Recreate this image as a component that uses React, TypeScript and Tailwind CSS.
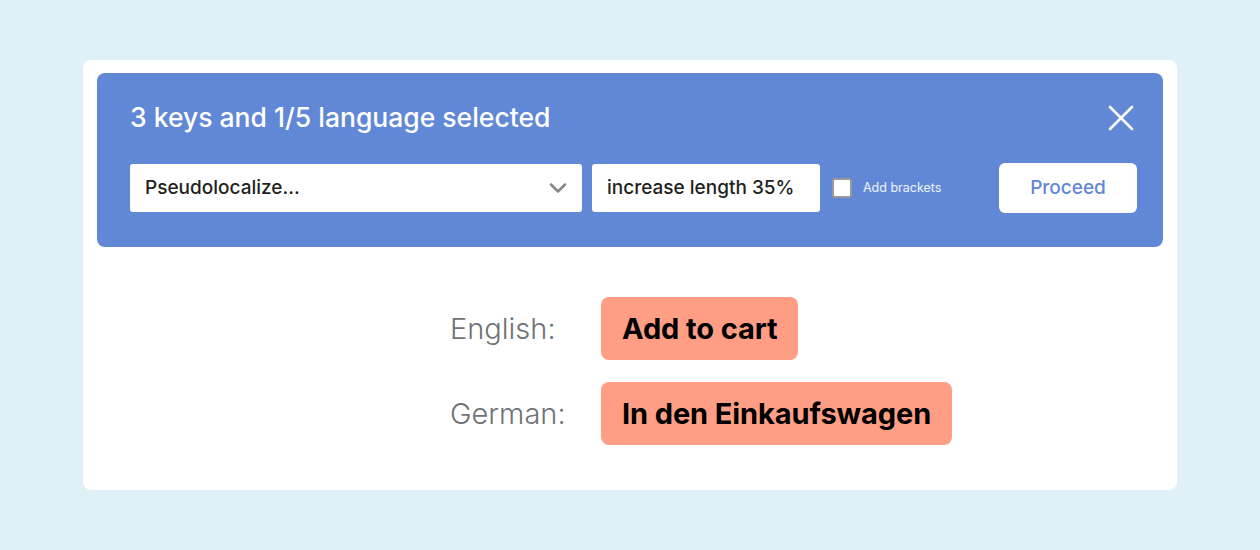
import { ChevronDown } from "lucide-react";

const font = { fontFamily: "Inter, 'Noto Sans', sans-serif" };

const Row = ({ label, text }: { label: string; text: string }) => {
  return (
    <div className="flex items-center">
      <span className="w-[151px] text-[29px] font-light text-[#6f7276]">{label}</span>
      <span className="h-[63px] flex items-center px-[21px] rounded-lg bg-[#ff9e84] text-[29px] font-bold text-black tracking-[-0.1px]">
        {text}
      </span>
    </div>
  );
};

export default function App() {
  return (
    <div className="w-[1260px] h-[550px] bg-[#dff1f7] pt-[60px] pl-[83px]" style={font}>
      <div className="w-[1094px] h-[430px] bg-white rounded-lg p-[14px] pt-[13px]">
        <div className="h-[174px] bg-[#6188d6] rounded-lg pl-[33px] pr-[26px] pt-[28px]">
          <div className="flex items-center justify-between h-[34px]">
            <h1 className="text-[26.5px] font-medium text-white">
              3 keys and 1/5 language selected
            </h1>
            <svg width="26" height="26" viewBox="0 0 26 26" className="mr-[3px]">
              <path d="M2 2L24 24M24 2L2 24" stroke="white" strokeWidth="2.6" strokeLinecap="round" />
            </svg>
          </div>
          <div className="flex items-center mt-[28px]">
            <div className="w-[452px] h-[48px] bg-white rounded-[3px] flex items-center justify-between pl-[15px] pr-[10px]">
              <span className="text-[19px] font-medium text-[#231f20]">Pseudolocalize...</span>
              <ChevronDown className="text-[#888]" size={28} strokeWidth={2.2} />
            </div>
            <div className="ml-[10px] w-[228px] h-[48px] bg-white rounded-[3px] flex items-center pl-[15px]">
              <span className="text-[19px] font-medium text-[#231f20]">increase length 35%</span>
            </div>
            <div className="ml-[12px] w-[20px] h-[20px] bg-white rounded-[3px] border-2 border-[#9a9a9a]" />
            <span className="ml-[11px] text-[12.5px] text-white/90">Add brackets</span>
            <div className="flex-1" />
            <button className="w-[138px] h-[50px] bg-white rounded-md text-[19px] font-medium text-[#6188d6]">
              Proceed
            </button>
          </div>
        </div>
        <div className="pl-[353px] pt-[50px] flex flex-col gap-[22px]">
          <Row label="English:" text="Add to cart" />
          <Row label="German:" text="In den Einkaufswagen" />
        </div>
      </div>
    </div>
  );
}
